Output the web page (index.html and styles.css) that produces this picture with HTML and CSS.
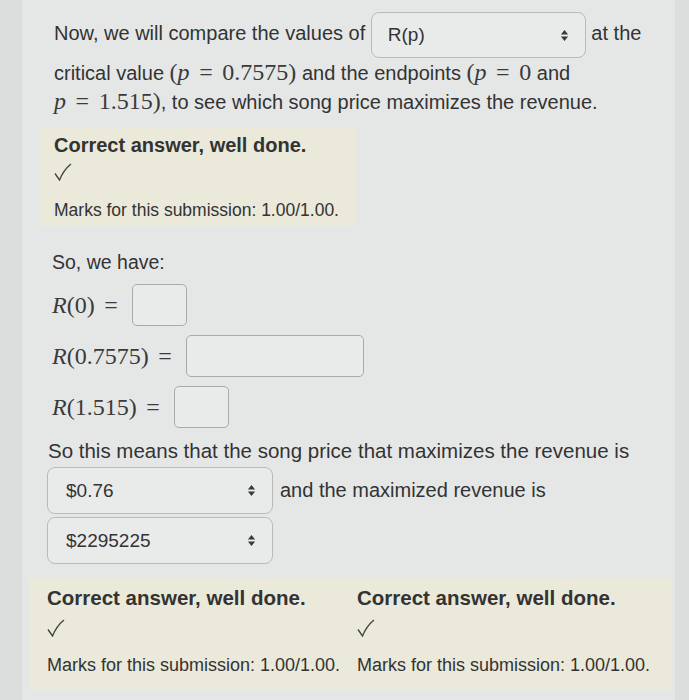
FILE: index.html
```html
<!DOCTYPE html>
<html lang="en">

<head>
    <meta charset="UTF-8">
    <meta name="viewport" content="width=device-width, initial-scale=1.0">
    <title>Revenue question</title>
    <link rel="stylesheet" href="styles.css">
</head>

<body>
    <div class="page">
        <p class="intro">
            Now, we will compare the values of
            <span class="select wide"><span class="select-text">R(p)</span><svg class="arrows" viewBox="0 0 10 14"><path d="M5 1 L9 6 L1 6 Z M5 13 L9 8 L1 8 Z" /></svg></span>
            at the critical value <span class="math">(<i>p</i><span class="rel">=</span>0.7575)</span> and the endpoints
            <span class="math">(<i>p</i><span class="rel">=</span>0</span> and <span class="math"><i>p</i><span class="rel">=</span>1.515)</span>, to see which song price maximizes the revenue.
        </p>

        <div class="feedback small">
            <div class="fb-title">Correct answer, well done.</div>
            <svg class="tick" viewBox="0 0 18 18"><path d="M1 10.5 L5.5 17 Q9.5 7 17 1" /></svg>
            <div class="marks">Marks for this submission: 1.00/1.00.</div>
        </div>

        <p class="have">So, we have:</p>

        <div class="eq"><span class="math"><i>R</i>(0)<span class="rel">=</span></span><span class="box b-small"></span></div>
        <div class="eq"><span class="math"><i>R</i>(0.7575)<span class="rel">=</span></span><span class="box b-wide"></span></div>
        <div class="eq"><span class="math"><i>R</i>(1.515)<span class="rel">=</span></span><span class="box b-small"></span></div>

        <p class="means">So this means that the song price that maximizes the revenue is</p>
        <div class="answer-row">
            <span class="select mid"><span class="select-text">$0.76</span><svg class="arrows" viewBox="0 0 10 14"><path d="M5 1 L9 6 L1 6 Z M5 13 L9 8 L1 8 Z" /></svg></span>
            <span class="after">and the maximized revenue is</span>
        </div>
        <div class="answer-row">
            <span class="select mid"><span class="select-text">$2295225</span><svg class="arrows" viewBox="0 0 10 14"><path d="M5 1 L9 6 L1 6 Z M5 13 L9 8 L1 8 Z" /></svg></span>
        </div>

        <div class="feedback double">
            <div class="fb-col">
                <div class="fb-title">Correct answer, well done.</div>
                <svg class="tick" viewBox="0 0 18 18"><path d="M1 10.5 L5.5 17 Q9.5 7 17 1" /></svg>
                <div class="marks">Marks for this submission: 1.00/1.00.</div>
            </div>
            <div class="fb-col">
                <div class="fb-title">Correct answer, well done.</div>
                <svg class="tick" viewBox="0 0 18 18"><path d="M1 10.5 L5.5 17 Q9.5 7 17 1" /></svg>
                <div class="marks">Marks for this submission: 1.00/1.00.</div>
            </div>
        </div>
    </div>
</body>

</html>
```

FILE: styles.css
```css
body {
    margin: 0;
    background-color: #dcdede;
    font-family: "Liberation Sans", Arial, sans-serif;
    color: #333;
}

.page {
    margin-left: 22px;
    width: 653px;
    min-height: 700px;
    background-color: #e5e7e7;
    padding-top: 12px;
    box-sizing: border-box;
}

p {
    margin: 0;
}

.intro {
    margin-left: 32px;
    width: 600px;
    font-size: 20px;
    line-height: 28px;
}

.math {
    font-family: "Liberation Serif", "DejaVu Serif", serif;
    font-size: 24px;
    white-space: nowrap;
    color: #3a3a3a;
}

.rel {
    margin: 0 0.4em;
}

.select {
    display: inline-flex;
    align-items: center;
    justify-content: space-between;
    box-sizing: border-box;
    height: 46px;
    padding: 0 16px 0 18px;
    border: 1px solid #b9bbbb;
    border-radius: 8px;
    background-color: #e9ebeb;
    vertical-align: middle;
    font-size: 19px;
}

.select.wide {
    width: 215px;
    padding-left: 16px;
}

.select.mid {
    width: 226px;
    height: 47px;
}

.arrows {
    width: 9px;
    height: 13px;
    fill: #3a3a3a;
}

.feedback {
    background-color: #eae9da;
}

.feedback.small {
    margin: 12px 0 0 18px;
    width: 315px;
    height: 98px;
    padding: 5px 10px 0 14px;
    box-sizing: border-box;
}

.fb-title {
    font-weight: bold;
    font-size: 20px;
    line-height: 24px;
}

.tick {
    display: block;
    width: 18px;
    height: 18px;
    margin-top: 6px;
    fill: none;
    stroke: #444;
    stroke-width: 1.4;
}

.marks {
    margin-top: 18px;
    font-size: 17.5px;
    line-height: 22px;
}

.have {
    margin: 23px 0 0 30px;
    font-size: 19.5px;
    line-height: 26px;
}

.eq {
    display: flex;
    align-items: center;
    margin: 9px 0 0 30px;
    height: 42px;
}

.box {
    display: inline-block;
    box-sizing: border-box;
    height: 42px;
    margin-left: 5px;
    border: 1px solid #a9abab;
    border-radius: 5px;
    background-color: #e9ebeb;
}

.b-small {
    width: 55px;
}

.b-wide {
    width: 178px;
}

.means {
    margin: 10px 0 0 26px;
    font-size: 20.5px;
    line-height: 26px;
}

.answer-row {
    display: flex;
    align-items: center;
    gap: 7px;
    margin: 3px 0 0 25px;
    font-size: 20px;
}

.feedback.double {
    display: flex;
    margin: 14px 0 0 8px;
    width: 642px;
    height: 112px;
    padding: 8px 0 0 17px;
    box-sizing: border-box;
}

.fb-col {
    width: 310px;
}

.double .fb-title {
    font-size: 20.5px;
}

.double .tick {
    margin-top: 9px;
}

.double .marks {
    margin-top: 17px;
    font-size: 18px;
}
```
